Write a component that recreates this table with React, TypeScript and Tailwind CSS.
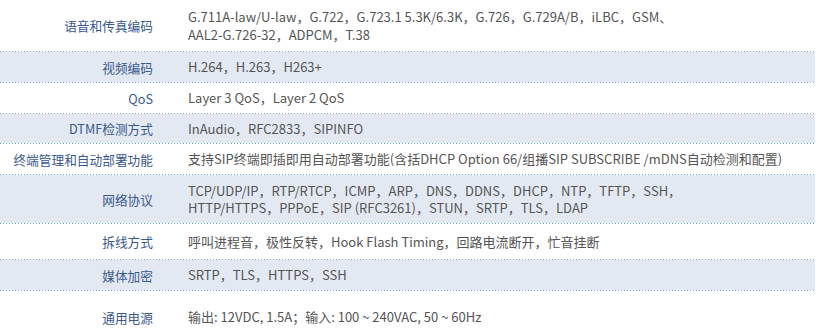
import React from "react";

const rows: { label: string; value: React.ReactNode; h: string; blue: boolean }[] = [
  {
    label: "语音和传真编码",
    value: (
      <>
        G.711A-law/U-law，G.722，G.723.1 5.3K/6.3K，G.726，G.729A/B，iLBC，GSM、
        <br />
        AAL2-G.726-32，ADPCM，T.38
      </>
    ),
    h: "h-[51px]",
    blue: false,
  },
  { label: "视频编码", value: "H.264，H.263，H263+", h: "h-[30px]", blue: true },
  { label: "QoS", value: "Layer 3 QoS，Layer 2 QoS", h: "h-[30px]", blue: false },
  { label: "DTMF检测方式", value: "InAudio，RFC2833，SIPINFO", h: "h-[29px]", blue: true },
  {
    label: "终端管理和自动部署功能",
    value: "支持SIP终端即插即用自动部署功能(含括DHCP Option 66/组播SIP SUBSCRIBE /mDNS自动检测和配置)",
    h: "h-[30px]",
    blue: false,
  },
  {
    label: "网络协议",
    value: (
      <>
        TCP/UDP/IP，RTP/RTCP，ICMP，ARP，DNS，DDNS，DHCP，NTP，TFTP，SSH，
        <br />
        HTTP/HTTPS，PPPoE，SIP (RFC3261)，STUN，SRTP，TLS，LDAP
      </>
    ),
    h: "h-[48px]",
    blue: true,
  },
  { label: "拆线方式", value: "呼叫进程音，极性反转，Hook Flash Timing，回路电流断开，忙音挂断", h: "h-[35px]", blue: false },
  { label: "媒体加密", value: "SRTP，TLS，HTTPS，SSH", h: "h-[30px]", blue: true },
  { label: "通用电源", value: "输出: 12VDC, 1.5A；输入: 100 ~ 240VAC, 50 ~ 60Hz", h: "h-[52px]", blue: false },
];

function Divider() {
  return (
    <div className="h-px w-full bg-[repeating-linear-gradient(to_right,#79aecb_0px,#79aecb_1px,transparent_1px,transparent_3px)]" />
  );
}

export default function App() {
  return (
    <div
      className="w-[822px] h-[336px] overflow-hidden bg-white"
      style={{ fontFamily: '"Noto Sans CJK SC", "Noto Sans", sans-serif' }}
    >
      <div className="w-[815px] flex flex-col">
        {rows.map((r, i) => (
          <React.Fragment key={i}>
            <div className={`${r.h} flex items-center ${r.blue ? "bg-[#e3e9f2]" : "bg-white"}`}>
              <div className="w-[153px] shrink-0 text-right text-[12.7px] leading-[17px] text-[#3a5890]">
                {r.label}
              </div>
              <div className="pl-[35px] text-[13px] leading-[17.5px] text-[#555555]">{r.value}</div>
            </div>
            {i < rows.length - 1 && <Divider />}
          </React.Fragment>
        ))}
      </div>
    </div>
  );
}
